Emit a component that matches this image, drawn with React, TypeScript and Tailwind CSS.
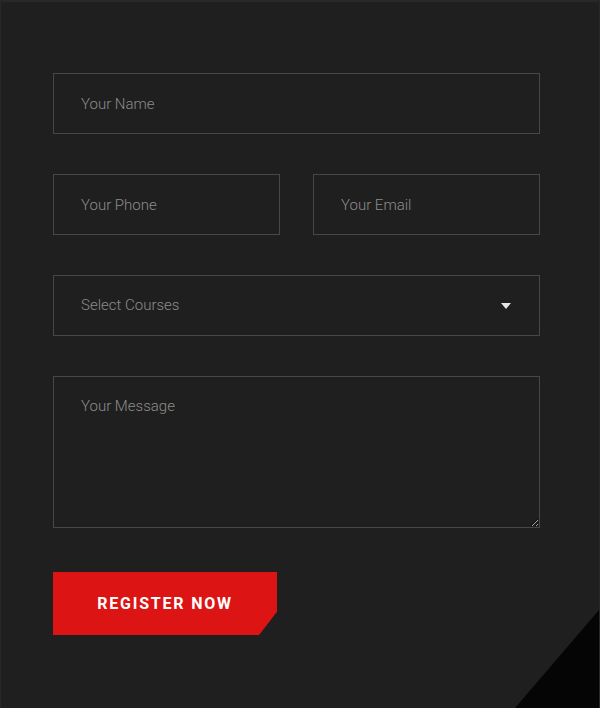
import React from "react";

export default function App() {
  const field =
    "w-full h-[61px] bg-transparent border border-[#474747] px-[27px] text-[15px] font-light text-[#8c8c8c] placeholder:text-[#8c8c8c] outline-none";
  return (
    <div
      className="relative w-[600px] h-[708px] overflow-hidden bg-[#1f1f1f] border-t-2 border-x border-[#282828]"
      style={{ fontFamily: "Roboto, 'Liberation Sans', sans-serif" }}
    >
      <form className="flex flex-col gap-[40px] pl-[52px] pr-[59px] pt-[71px]">
        <input className={field} placeholder="Your Name" />
        <div className="grid grid-cols-2 gap-[33px]">
          <input className={field} placeholder="Your Phone" />
          <input className={field} placeholder="Your Email" />
        </div>
        <div className="relative">
          <div className={field + " flex items-center"}>Select Courses</div>
          <svg
            className="absolute right-[29px] top-[28px]"
            width="10"
            height="6"
            viewBox="0 0 10 6"
          >
            <path d="M0 0 L10 0 L5 6 Z" fill="#e6e6e6" />
          </svg>
        </div>
        <textarea
          className="w-full h-[152px] bg-transparent border border-[#474747] px-[27px] pt-[17px] text-[15px] leading-[24px] font-light text-[#8c8c8c] placeholder:text-[#8c8c8c] outline-none"
          placeholder="Your Message"
        />
        <div className="pt-[4px]">
          <button
            type="button"
            className="w-[224px] h-[63px] bg-[#dc1414] text-white text-[16px] font-bold tracking-[1.8px] flex items-center justify-center [clip-path:polygon(0_0,100%_0,100%_63%,92%_100%,0_100%)]"
          >
            REGISTER NOW
          </button>
        </div>
      </form>
      <svg
        className="absolute right-0 bottom-0"
        width="84"
        height="98"
        viewBox="0 0 84 98"
      >
        <path d="M84 0 L84 98 L0 98 Z" fill="#050505" />
      </svg>
    </div>
  );
}
